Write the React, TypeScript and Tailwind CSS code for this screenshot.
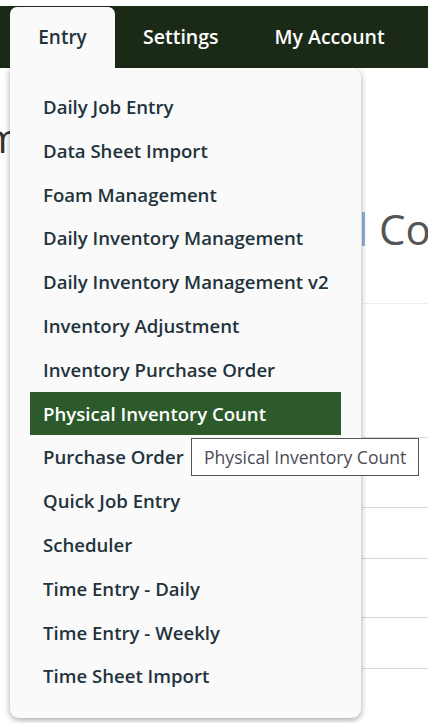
const items = [
  "Daily Job Entry",
  "Data Sheet Import",
  "Foam Management",
  "Daily Inventory Management",
  "Daily Inventory Management v2",
  "Inventory Adjustment",
  "Inventory Purchase Order",
  "Physical Inventory Count",
  "Purchase Order",
  "Quick Job Entry",
  "Scheduler",
  "Time Entry - Daily",
  "Time Entry - Weekly",
  "Time Sheet Import",
];

const rowHeights = [134, 70, 51, 59, 51];

export default function App() {
  return (
    <div className="relative w-[428px] h-[723px] overflow-hidden bg-white font-['Open_Sans',sans-serif]">
      {/* top nav */}
      <div className="mt-[6px] h-[62px] bg-[#1b2a17] flex items-end pl-[10px]">
        <div className="w-[105px] h-[61px] bg-[#fafafa] rounded-t-[7px] flex items-center justify-center text-[19px] font-semibold text-[#23333c]">
          Entry
        </div>
        <div className="h-full flex items-center pl-[28px] gap-[56px] text-[19.5px] font-semibold text-white">
          <span>Settings</span>
          <span>My Account</span>
        </div>
      </div>

      {/* page behind the menu */}
      <div className="flex">
        <div className="w-[362px] shrink-0 overflow-hidden pt-[50px]">
          <div className="-ml-[16px] text-[40px] leading-none text-[#333]">m</div>
        </div>
        <div className="flex-1 pt-[144px]">
          <div className="flex items-center gap-[14px] h-[34px]">
            <div className="w-[3px] h-[34px] bg-[#8fb3d9]" />
            <span className="text-[42px] leading-none text-[#555] whitespace-nowrap">Co</span>
          </div>
          <div className="mt-[57px] border-t border-[#eeeeee]">
            {rowHeights.map((h, i) => (
              <div key={i} className="border-b border-[#d8d8d8]" style={{ height: h }} />
            ))}
          </div>
        </div>
      </div>

      {/* dropdown */}
      <div className="absolute left-[10px] top-[68px] w-[351px] h-[650px] bg-[#fafafa] rounded-b-[9px] rounded-tr-[9px] shadow-[0_2px_6px_rgba(0,0,0,0.35)] pt-[17px] px-[20px]">
        {items.map((it) => {
          const active = it === "Physical Inventory Count";
          return (
            <div
              key={it}
              className={
                "h-[43.8px] flex items-center px-[13px] text-[18.6px] font-semibold whitespace-nowrap " +
                (active ? "bg-[#2c5a2a] text-white" : "text-[#23333c]")
              }
            >
              {it}
            </div>
          );
        })}
      </div>
      {/* join tab and menu */}
      <div className="absolute left-[10px] top-[60px] w-[105px] h-[12px] bg-[#fafafa]" />

      {/* tooltip */}
      <div className="absolute left-[191px] top-[438px] w-[228px] h-[38px] bg-white border border-[#555] flex items-center pl-[12px] text-[17.6px] text-[#4b4b55] whitespace-nowrap">
        Physical Inventory Count
      </div>
    </div>
  );
}
